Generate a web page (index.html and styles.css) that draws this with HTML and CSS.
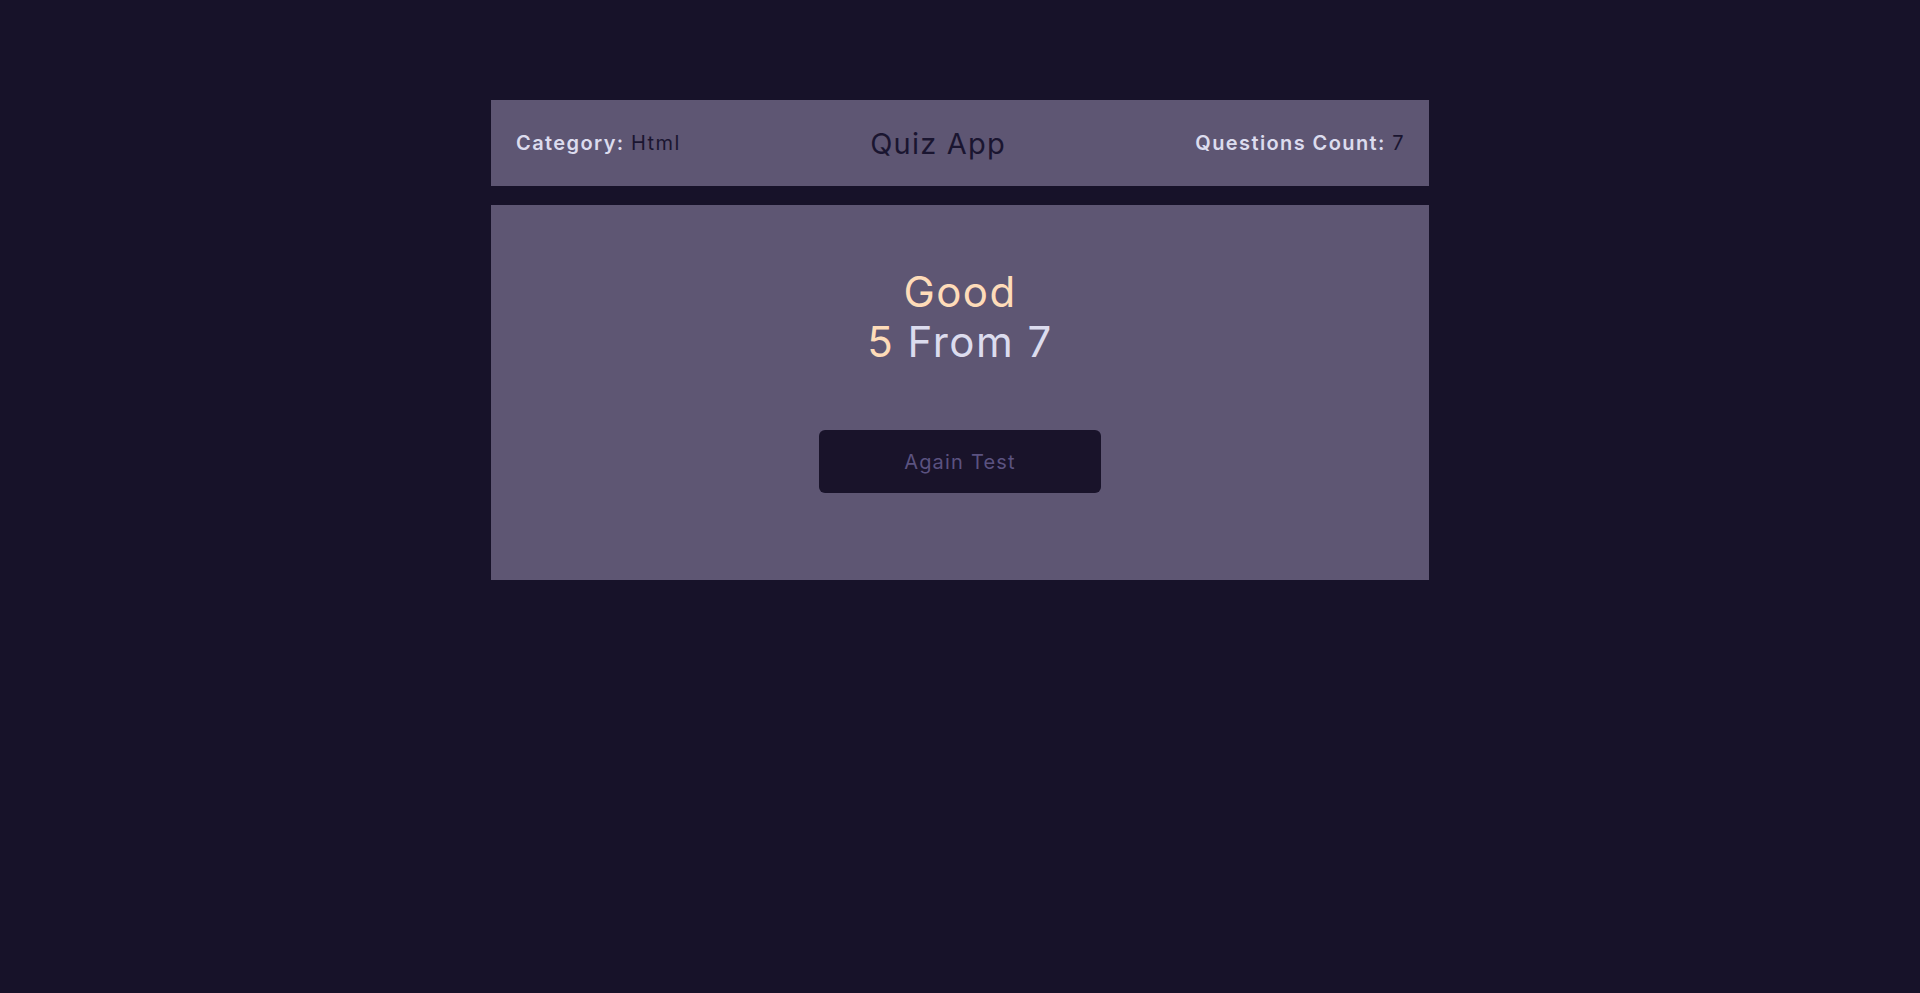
FILE: index.html
```html
<!DOCTYPE html>
<html lang="en">
<head>
<meta charset="utf-8">
<title>Quiz App</title>
<link rel="stylesheet" href="styles.css">
</head>
<body>
<div class="quiz-app">
  <div class="quiz-info">
    <div class="category">Category: <span>Html</span></div>
    <div class="title">Quiz App</div>
    <div class="count">Questions Count: <span>7</span></div>
  </div>
  <div class="results">
    <div class="grade">Good</div>
    <div class="score"><span class="got">5</span> From 7</div>
    <button class="again">Again Test</button>
  </div>
</div>
</body>
</html>
```
FILE: styles.css
```css
* { box-sizing: border-box; }
html, body { margin: 0; padding: 0; }
body {
  background: #171229;
  font-family: Inter, "Open Sans", sans-serif;
  min-height: 993px;
}
.quiz-app {
  width: 938px;
  margin: 100px auto 0;
  display: flex;
  flex-direction: column;
  gap: 19px;
}
.quiz-info {
  height: 86px;
  background: #5e5673;
  display: flex;
  justify-content: space-between;
  align-items: center;
  padding: 0 24px 0 25px;
}
.category, .count {
  font-size: 20px;
  font-weight: 600;
  letter-spacing: 1.4px;
  color: #dcdcee;
}
.category span, .count span {
  font-weight: 400;
  color: #1a1530;
}
.title {
  font-size: 29px;
  letter-spacing: 1.2px;
  color: #1a1530;
}
.results {
  height: 375px;
  background: #5e5673;
  display: flex;
  flex-direction: column;
  align-items: center;
  padding-top: 62px;
}
.grade {
  font-size: 42px;
  line-height: 50px;
  letter-spacing: 1.4px;
  color: #fedcb9;
}
.score {
  font-size: 42px;
  line-height: 50px;
  letter-spacing: 1.5px;
  color: #dcdcee;
}
.score .got { color: #fedcb9; }
.again {
  margin-top: 63px;
  width: 282px;
  height: 63px;
  border: none;
  border-radius: 6px;
  background: #19132a;
  color: #5b5280;
  font-family: inherit;
  font-size: 20px;
  letter-spacing: 1.2px;
  cursor: pointer;
}
```
